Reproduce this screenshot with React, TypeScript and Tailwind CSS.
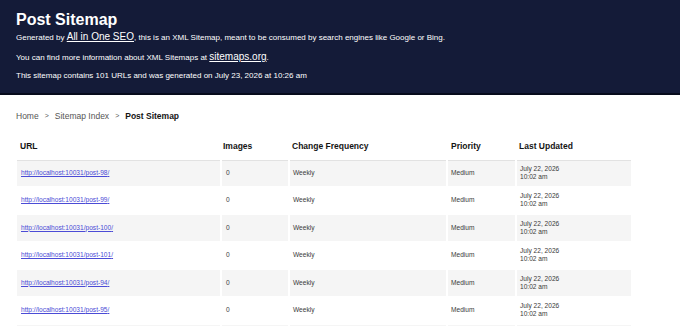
const rows = ['post-98', 'post-99', 'post-100', 'post-101', 'post-94', 'post-95', 'post-96']

export default function App() {
  return (
    <div className="h-screen overflow-hidden bg-white font-['Liberation_Sans',Arial,sans-serif] text-[#141414]">
      <header className="h-[95px] border-b-2 border-[#070b1c] bg-[#141b38] px-4 pt-[10px] text-white">
        <h1 className="text-[16px] font-bold leading-[20px]">Post Sitemap</h1>
        <p className="text-[8px] leading-[13px]">
          Generated by{' '}
          <a href="#" className="text-[10px] underline">
            All in One SEO
          </a>
          , this is an XML Sitemap, meant to be consumed by search engines like Google or Bing.
        </p>
        <p className="mt-[6px] text-[8px] leading-[14px]">
          You can find more information about XML Sitemaps at{' '}
          <a href="#" className="text-[10px] underline">
            sitemaps.org
          </a>
          .
        </p>
        <p className="mt-[4px] text-[8px] leading-[14px]">
          This sitemap contains 101 URLs and was generated on July 23, 2026 at 10:26 am
        </p>
      </header>

      <main className="px-[15px]">
        <nav className="mt-[14px] flex items-center gap-[6px] pl-[1px] text-[8.5px] leading-[14px] text-[#555]">
          <span>Home</span>
          <span className="text-[7px]">&gt;</span>
          <span>Sitemap Index</span>
          <span className="text-[7px]">&gt;</span>
          <span className="font-bold text-[#141414]">Post Sitemap</span>
        </nav>

        <table className="mt-[10px] w-[618px] border-separate border-spacing-[2px] text-left">
          <thead>
            <tr className="text-[8.5px] font-bold">
              <th className="h-[23px] w-[203px] px-[3px] align-middle">URL</th>
              <th className="w-[66px] px-[1px]">Images</th>
              <th className="w-[156px] px-[2px]">Change Frequency</th>
              <th className="w-[67px] px-[3px]">Priority</th>
              <th className="px-[2px]">Last Updated</th>
            </tr>
          </thead>
          <tbody className="text-[6.6px] text-[#3a3a3a]">
            {rows.map((slug, i) => {
              const bg = i % 2 === 0 ? 'bg-[#f5f5f5]' : 'bg-white'
              const top = i === 0 ? 'border-t border-[#e2e2e2]' : ''
              return (
                <tr key={slug}>
                  <td className={`h-[25.5px] px-[4px] ${bg} ${top}`}>
                    <a href="#" className="text-[#4b4bd6] underline">
                      http://localhost:10031/{slug}/
                    </a>
                  </td>
                  <td className={`px-[4px] ${bg} ${top}`}>0</td>
                  <td className={`px-[3px] ${bg} ${top}`}>Weekly</td>
                  <td className={`px-[3px] ${bg} ${top}`}>Medium</td>
                  <td className={`px-[3px] leading-[8px] ${bg} ${top}`}>
                    July 22, 2026
                    <br />
                    10:02 am
                  </td>
                </tr>
              )
            })}
          </tbody>
        </table>
      </main>
    </div>
  )
}
